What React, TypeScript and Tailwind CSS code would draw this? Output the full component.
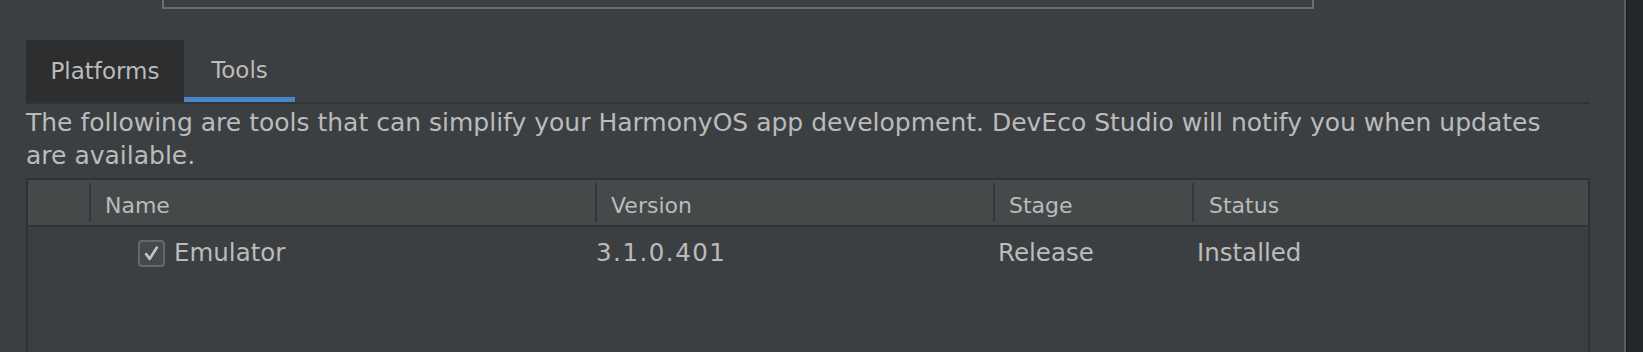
import { ReactNode } from "react";

const columns = [
  { name: "Name", className: "pl-[14px]" },
  { name: "Version", className: "pl-[14px]" },
  { name: "Stage", className: "pl-[14px]" },
  { name: "Status", className: "pl-[15px]" },
];

const tools = [
  { name: "Emulator", version: "3.1.0.401", stage: "Release", status: "Installed", checked: true },
];

function Checkbox({ checked }: { checked: boolean }) {
  return (
    <span className="flex h-[27px] w-[27px] items-center justify-center rounded-[4px] border-2 border-[#62676a] bg-[#45494b]">
      {checked && (
        <svg viewBox="0 0 16 16" className="h-[19px] w-[19px]" fill="none">
          <path
            d="M3.5 8.5 L6.5 12.5 L12.5 3"
            stroke="#c4c4c4"
            strokeWidth="2.2"
            strokeLinecap="round"
            strokeLinejoin="round"
          />
        </svg>
      )}
    </span>
  );
}

function Cell({ children, className = "" }: { children?: ReactNode; className?: string }) {
  return <div className={"flex items-center " + className}>{children}</div>;
}

export default function App() {
  return (
    <div className="flex h-[352px] w-full overflow-hidden bg-[#3c3f41] font-['DejaVu_Sans',sans-serif] text-[#bbbbbb]">
      <div className="flex min-w-0 flex-1 flex-col pl-[26px] pr-[34px]">
        {/* bottom of the field above */}
        <div className="ml-[136px] h-[9px] w-[1152px] border-x-2 border-b-2 border-[#6a6d70]" />

        {/* tabs */}
        <div className="mt-[31px] flex h-[64px] border-b-2 border-[#313335]">
          <div className="flex w-[158px] items-center justify-center bg-[#2c2e30] pt-[1px] text-[23px]">
            Platforms
          </div>
          <div className="flex w-[111px] items-center justify-center border-b-[5px] border-[#4a86c5] pt-[4px] text-[23px]">
            Tools
          </div>
        </div>

        <p className="mt-[2px] pr-[10px] text-[25px] leading-[33px]">
          The following are tools that can simplify your HarmonyOS app development. DevEco Studio will notify you when updates are available.
        </p>

        {/* table */}
        <div className="mt-[6px] flex min-h-0 flex-1 flex-col border-x-2 border-t-2 border-[#2f3133]">
          <div className="grid h-[47px] grid-cols-[61px_506px_398px_199px_1fr] border-b-2 border-[#2f3133] bg-[#45494a] py-[3px] text-[22px]">
            <Cell />
            {columns.map((c) => (
              <Cell key={c.name} className={"border-l-2 border-[#33363a] pt-[5px] " + c.className}>
                {c.name}
              </Cell>
            ))}
          </div>
          {tools.map((t) => (
            <div key={t.name} className="grid h-[48px] grid-cols-[61px_506px_398px_199px_1fr] pt-[4px] text-[24.5px]">
              <Cell />
              <Cell className="gap-[9px] pl-[49px]">
                <Checkbox checked={t.checked} />
                {t.name}
              </Cell>
              <Cell className="pl-[1px] tracking-[1.5px]">{t.version}</Cell>
              <Cell className="pl-[5px]">{t.stage}</Cell>
              <Cell className="pl-[5px]">{t.status}</Cell>
            </div>
          ))}
        </div>
      </div>

      {/* window edge */}
      <div className="flex w-[19px] shrink-0">
        <div className="w-[2px] bg-[#5b5e61]" />
        <div className="w-[1px] bg-[#1b1c1e]" />
        <div className="flex-1 bg-[#23262a]" />
      </div>
    </div>
  );
}
